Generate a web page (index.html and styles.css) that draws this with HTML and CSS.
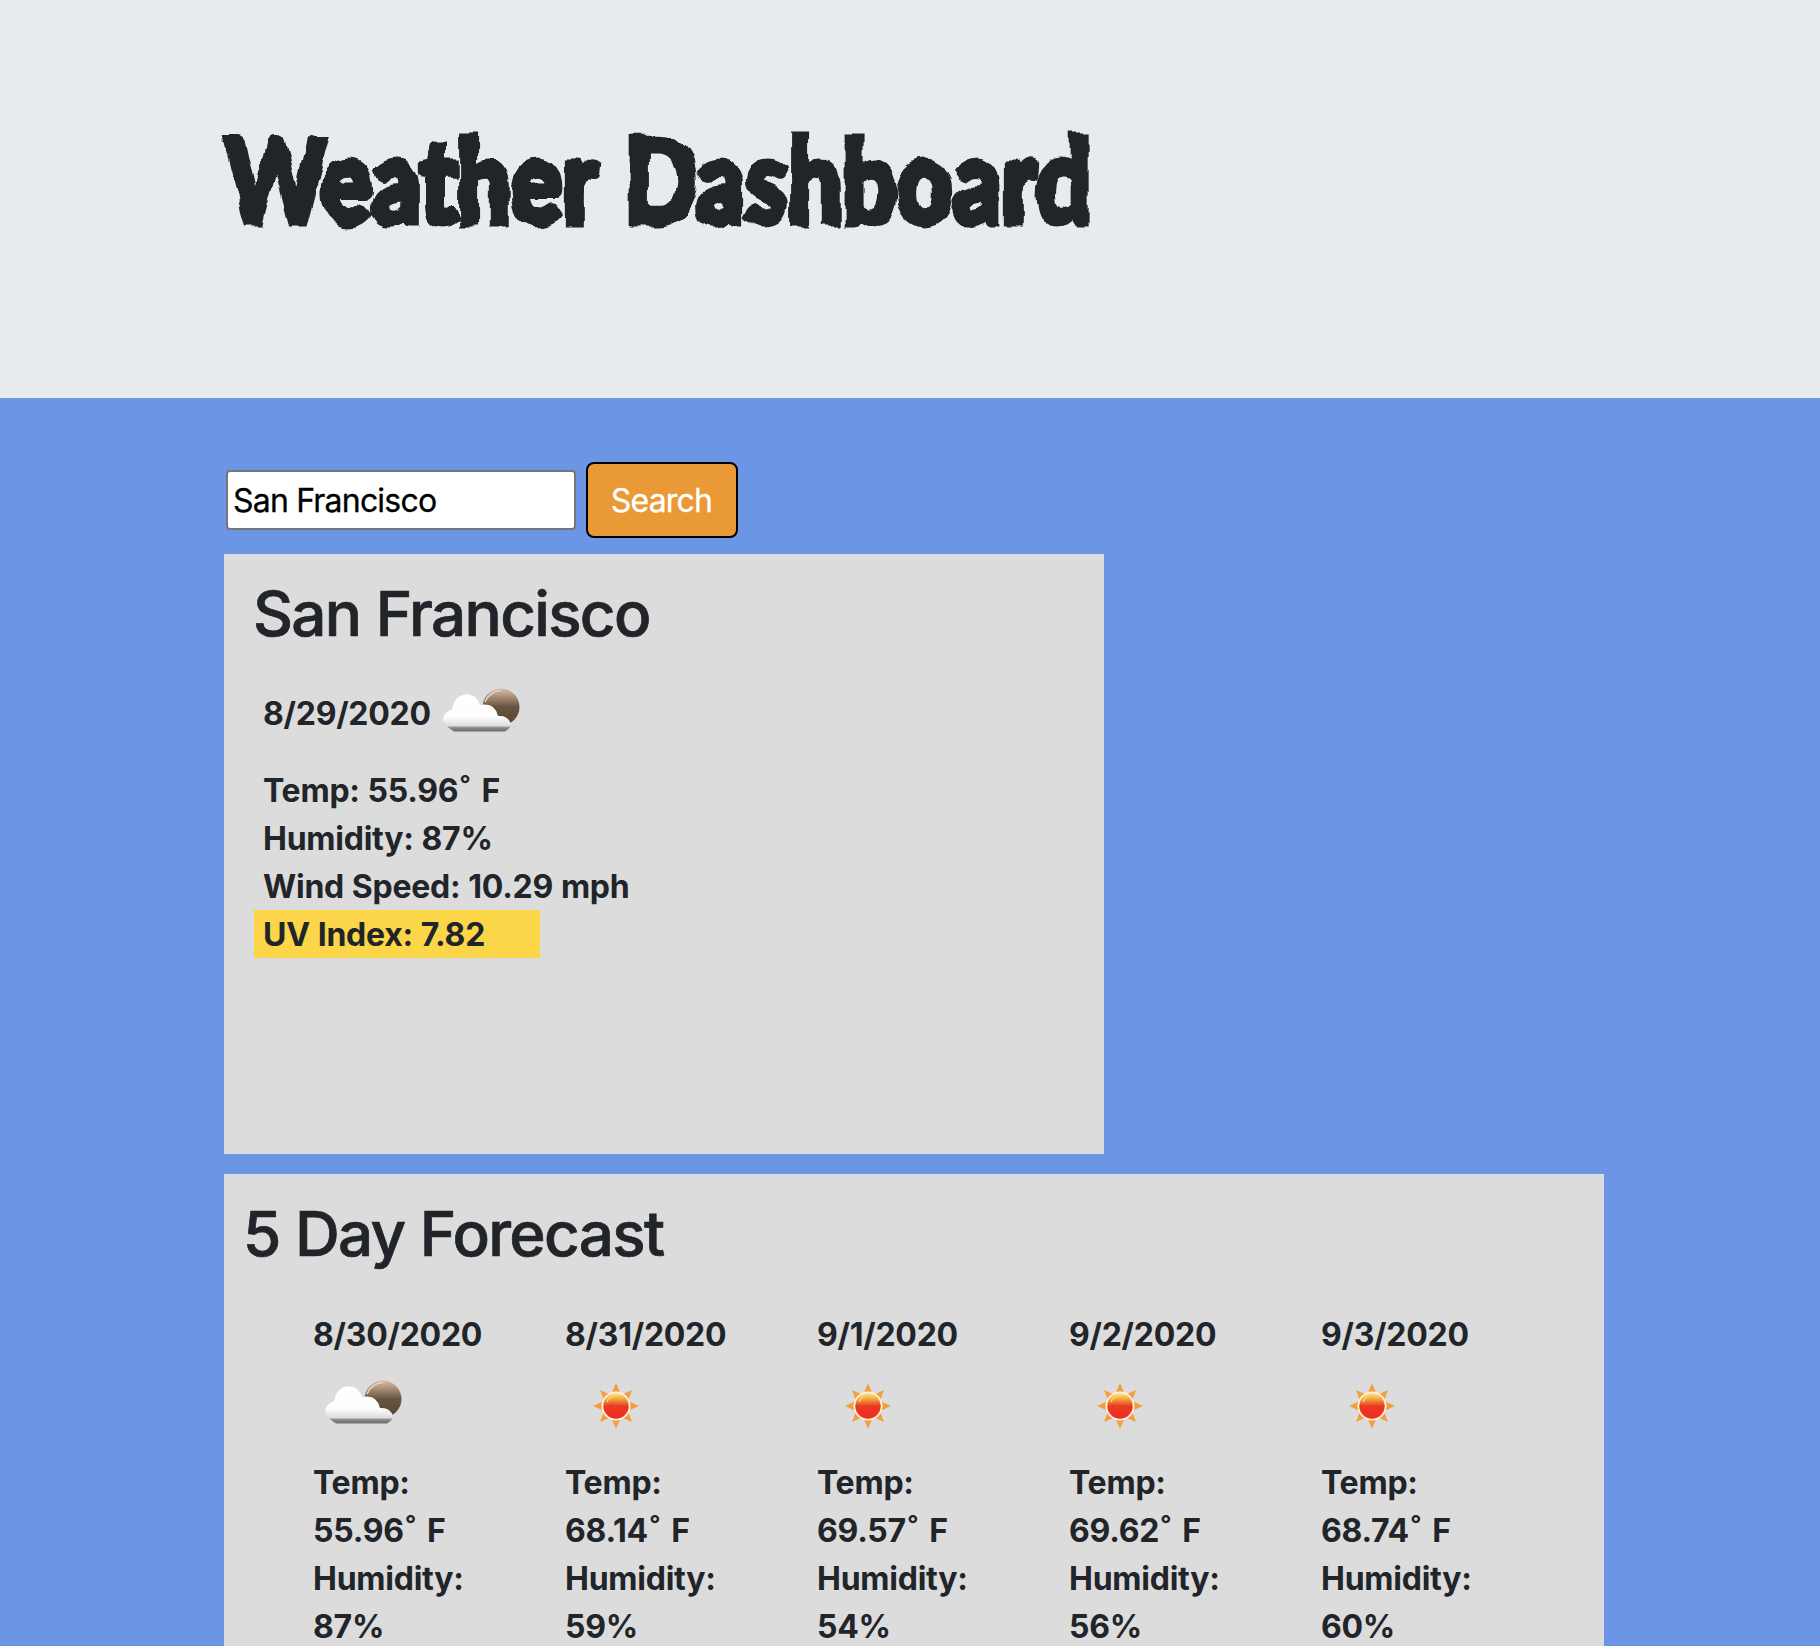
FILE: index.html
```html
<!DOCTYPE html>
<html lang="en">
<head>
<meta charset="utf-8">
<title>Weather Dashboard</title>
<link rel="stylesheet" href="styles.css">
</head>
<body>
<svg class="defs" width="0" height="0" aria-hidden="true">
  <defs>
    <filter id="rough" x="-5%" y="-10%" width="110%" height="120%" color-interpolation-filters="sRGB">
      <feTurbulence type="fractalNoise" baseFrequency="0.05" numOctaves="1" seed="4" result="n"/>
      <feDisplacementMap in="SourceGraphic" in2="n" scale="11" xChannelSelector="R" yChannelSelector="G"/>
    </filter>
    <linearGradient id="moonFill" x1="0" y1="0" x2="0" y2="1">
      <stop offset="0" stop-color="#d9bda6"/><stop offset=".25" stop-color="#a48871"/><stop offset=".5" stop-color="#675341"/><stop offset="1" stop-color="#55432f"/>
    </linearGradient>
    <linearGradient id="cloudFill" x1="0" y1="0" x2="0" y2="1">
      <stop offset="0" stop-color="#fff"/><stop offset=".6" stop-color="#fdfdfd"/><stop offset=".84" stop-color="#dedede"/><stop offset=".9" stop-color="#8a8a8a"/><stop offset="1" stop-color="#6c6c6c"/>
    </linearGradient>
    <linearGradient id="sunFill" x1="0" y1="0" x2="0" y2="1">
      <stop offset="0" stop-color="#fbe48a"/><stop offset=".22" stop-color="#f3a93c"/><stop offset=".5" stop-color="#ea3a22"/><stop offset="1" stop-color="#ee2d25"/>
    </linearGradient>
    <symbol id="cloud" viewBox="0 0 100 100">
      <circle cx="69" cy="41" r="18.5" fill="url(#moonFill)"/>
      <path d="M53 36Q58 25 69 24.5" fill="none" stroke="#e9d5c6" stroke-width="1.5"/>
      <path d="M22 65.5Q15 62 11 54Q11 47 20 43Q22 33 28 30Q36 26 43 31Q47 35 48 39Q63 36 66 50Q76 49 79 58Q79 62 73 65.5Z" fill="url(#cloudFill)"/>
    </symbol>
    <symbol id="sun" viewBox="0 0 100 100">
      <path d="M50 25L55 37L66 32L62 43L73 48L62 53L66 64L55 59L50 71L45 59L34 64L38 53L27 48L38 43L34 32L45 37Z" fill="#f1a03f"/>
      <circle cx="50" cy="48" r="14.5" fill="#fdf0dc"/>
      <circle cx="50" cy="48" r="12.7" fill="url(#sunFill)"/>
      <path d="M41 44Q43 38 49 37.5" fill="none" stroke="#f9d66d" stroke-width="1.6"/>
    </symbol>
  </defs>
</svg>
<header class="banner"><h1 class="title">Weather Dashboard</h1></header>
<main class="content">
  <form class="search">
    <input class="search-input" type="text" value="San Francisco" aria-label="City">
    <button class="search-button" type="button">Search</button>
  </form>
  <section class="current">
    <h2 class="heading">San Francisco</h2>
    <div class="today"><span class="date">8/29/2020</span><svg class="icon"><use href="#cloud"/></svg></div>
    <p class="row">Temp: 55.96<span class="deg">˚</span> F</p>
    <p class="row">Humidity: 87%</p>
    <p class="row">Wind Speed: 10.29 mph</p>
    <p class="row uv">UV Index: 7.82</p>
  </section>
  <section class="forecast">
    <h2 class="heading">5 Day Forecast</h2>
    <div class="days">
      <div class="day"><span class="date">8/30/2020</span><svg class="icon"><use href="#cloud"/></svg><p>Temp:<br>55.96<span class="deg">˚</span> F</p><p>Humidity:<br>87%</p></div>
      <div class="day"><span class="date">8/31/2020</span><svg class="icon"><use href="#sun"/></svg><p>Temp:<br>68.14<span class="deg">˚</span> F</p><p>Humidity:<br>59%</p></div>
      <div class="day"><span class="date">9/1/2020</span><svg class="icon"><use href="#sun"/></svg><p>Temp:<br>69.57<span class="deg">˚</span> F</p><p>Humidity:<br>54%</p></div>
      <div class="day"><span class="date">9/2/2020</span><svg class="icon"><use href="#sun"/></svg><p>Temp:<br>69.62<span class="deg">˚</span> F</p><p>Humidity:<br>56%</p></div>
      <div class="day"><span class="date">9/3/2020</span><svg class="icon"><use href="#sun"/></svg><p>Temp:<br>68.74<span class="deg">˚</span> F</p><p>Humidity:<br>60%</p></div>
    </div>
  </section>
</main>
</body>
</html>
```
FILE: styles.css
```css
* { box-sizing: border-box; }
body {
  margin: 0;
  height: 1646px;
  overflow: hidden;
  background: #6c95e6;
  color: #212529;
  font: 700 32px/48px Inter, sans-serif;
  letter-spacing: -0.25px;
  word-spacing: 0.5px;
}
p, h1, h2 { margin: 0; }
.defs { position: absolute; }
.banner { height: 398px; padding: 105px 225px 0; background: #e7ebee; }
.title {
  width: max-content;
  font: 900 117px/146px Lato, sans-serif;
  letter-spacing: 0;
  word-spacing: 6px;
  white-space: nowrap;
  -webkit-text-stroke: 7px #212529;
  transform: scaleX(.82);
  transform-origin: 0 0;
  filter: url(#rough);
}
.content { padding: 64px 216px 0 224px; }
.search { display: flex; align-items: center; gap: 10px; height: 76px; padding-left: 2px; }
.search-input {
  width: 350px; height: 60px; padding: 1px 5px 0;
  border: 2px solid #767676; border-radius: 4px;
  background: #fff; color: #000;
  font: 400 32px/48px Inter, sans-serif; letter-spacing: -0.8px;
  -webkit-text-stroke: 0.3px #000;
}
.search-button {
  width: 152px; height: 76px; padding: 2px 1px 0 0;
  border: 2px solid #000; border-radius: 8px;
  background: #e99936; color: #fff;
  font: 400 32px/48px Inter, sans-serif; letter-spacing: -0.8px;
  -webkit-text-stroke: 0.3px #fff;
}
.current { width: 880px; height: 600px; margin-top: 16px; padding: 21px 30px 0; background: #dcdcdc; }
.heading {
  margin-left: -1px;
  font-weight: 500; font-size: 62px; line-height: 77px; letter-spacing: -1.7px;
  -webkit-text-stroke: 0.7px #212529;
}
.today { display: flex; height: 100px; margin-top: 14px; padding-left: 9px; }
.today .date { width: 169px; padding-top: 24px; }
.icon { display: block; width: 100px; height: 100px; }
.day .icon { margin: -1px 0 1px 1px; }
.row { height: 48px; padding: 1px 0 0 9px; }
.deg { margin: 0 3px 0 1px; }
.uv { width: 286px; background: #fad648; }
.forecast { width: 1380px; height: 520px; margin-top: 20px; padding: 21px 20px 0; background: #dcdcdc; }
.days { display: grid; grid-template-columns: repeat(5, 252px); margin-top: 39px; padding-left: 69px; }
.day { width: 190px; }
```
